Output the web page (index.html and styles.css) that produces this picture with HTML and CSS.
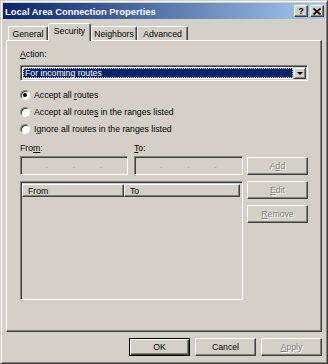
FILE: index.html
```html
<!DOCTYPE html>
<html lang="en">
<head>
  <meta charset="UTF-8" />
  <title>Local Area Connection Properties</title>
  <link rel="stylesheet" href="styles.css">
</head>
<body>
  <div class="window">
    <div class="titlebar">
      <span class="title">Local Area Connection Properties</span>
      <div class="caption-btns">
        <span class="cbtn help">?</span>
        <span class="cbtn">
          <svg width="8" height="7" viewBox="0 0 8 7"><path d="M0.5 0.5 L7.5 6.5 M7.5 0.5 L0.5 6.5" stroke="#000" stroke-width="1.6"/></svg>
        </span>
      </div>
    </div>

    <div class="tabs">
      <div class="tab tab-general">General</div>
      <div class="tab tab-security active">Security</div>
      <div class="tab tab-neighbors">Neighbors</div>
      <div class="tab tab-advanced">Advanced</div>
    </div>

    <div class="panel">
      <div class="field-label"><u>A</u>ction:</div>
      <div class="combo">
        <div class="combo-value"><span>For incoming routes</span></div>
        <div class="combo-arrow"><span class="tri"></span></div>
      </div>

      <div class="radios">
        <div class="radio-row"><span class="radio checked"></span><span>Accept all <u>r</u>outes</span></div>
        <div class="radio-row"><span class="radio"></span><span>Accept all route<u>s</u> in the ranges listed</span></div>
        <div class="radio-row"><span class="radio"></span><span>I<u>g</u>nore all routes in the ranges listed</span></div>
      </div>

      <div class="ranges">
        <div class="range-fields">
          <div class="range-col">
            <div class="field-label">Fro<u>m</u>:</div>
            <div class="ipbox"><i>.</i><i>.</i><i>.</i></div>
          </div>
          <div class="range-col">
            <div class="field-label"><u>T</u>o:</div>
            <div class="ipbox"><i>.</i><i>.</i><i>.</i></div>
          </div>
        </div>
        <div class="btn disabled side-add">A<u>d</u>d</div>

        <div class="listview">
          <div class="list-header">
            <div class="col col-from">From</div>
            <div class="col col-to">To</div>
          </div>
        </div>
        <div class="side-btns">
          <div class="btn disabled"><u>E</u>dit</div>
          <div class="btn disabled"><u>R</u>emove</div>
        </div>
      </div>
    </div>

    <div class="footer">
      <div class="btn default">OK</div>
      <div class="btn">Cancel</div>
      <div class="btn disabled"><u>A</u>pply</div>
    </div>
  </div>
</body>
</html>
```

FILE: styles.css
```css
body {
  margin: 0;
  font-family: "Liberation Sans", Arial, sans-serif;
  font-size: 8.7px;
  color: #000000;
  background: #d4d0c8;
}
u {
  text-decoration: underline;
  text-underline-offset: 1px;
}
.window {
  width: 328px;
  height: 364px;
  box-sizing: border-box;
  background: #d4d0c8;
  border: 1px solid;
  border-color: #d4d0c8 #404040 #404040 #d4d0c8;
  box-shadow: inset 1px 1px #ffffff, inset -1px -1px #808080;
  padding: 2px;
  display: flex;
  flex-direction: column;
}
.titlebar {
  height: 16px;
  background: linear-gradient(to right, #0a246a, #a6caf0);
  display: flex;
  align-items: center;
  justify-content: space-between;
  padding: 0 1px 0 2px;
}
.title {
  color: #ffffff;
  font-weight: bold;
  font-size: 9.4px;
}
.caption-btns {
  display: flex;
  gap: 2px;
}
.cbtn {
  width: 14px;
  height: 12px;
  box-sizing: border-box;
  background: #d4d0c8;
  border: 1px solid;
  border-color: #ffffff #404040 #404040 #ffffff;
  box-shadow: inset -1px -1px #808080;
  display: flex;
  align-items: center;
  justify-content: center;
  font-weight: bold;
  font-size: 9px;
  line-height: 1;
}
.tabs {
  display: flex;
  align-items: flex-end;
  height: 19px;
  margin-top: 2px;
  padding-left: 5px;
  position: relative;
  z-index: 1;
}
.tab {
  height: 14px;
  box-sizing: border-box;
  border: 1px solid;
  border-bottom: none;
  border-color: #ffffff #404040 transparent #ffffff;
  box-shadow: inset -1px 0 #808080;
  border-radius: 2px 2px 0 0;
  display: flex;
  align-items: center;
  justify-content: center;
}
.tab-general { width: 40px; }
.tab-security { width: 43px; }
.tab-neighbors { width: 46px; }
.tab-advanced { width: 51px; }
.tab.active {
  height: 18px;
  margin-bottom: -1px;
  background: #d4d0c8;
  padding-bottom: 3px;
}
.panel {
  height: 292px;
  margin: 0 3px 0 3px;
  box-sizing: border-box;
  border: 1px solid;
  border-color: #ffffff #404040 #404040 #ffffff;
  box-shadow: inset -1px -1px #808080;
  padding: 8px 13px 0 13px;
}
.field-label {
  height: 11px;
  line-height: 11px;
}
.panel > .field-label {
  margin-bottom: 5px;
}
.combo {
  height: 16px;
  box-sizing: border-box;
  border: 1px solid;
  border-color: #808080 #ffffff #ffffff #808080;
  box-shadow: inset 1px 1px #404040, inset -1px -1px #d4d0c8;
  background: #ffffff;
  display: flex;
  padding: 2px;
}
.combo-value {
  flex: 1;
  background: #0a246a;
  color: #ffffff;
  outline: 1px dotted #d4d0c8;
  outline-offset: -1px;
  display: flex;
  align-items: center;
  padding-left: 2px;
}
.combo-arrow {
  width: 13px;
  box-sizing: border-box;
  margin: -1px -1px -1px 0;
  background: #d4d0c8;
  border: 1px solid;
  border-color: #d4d0c8 #404040 #404040 #d4d0c8;
  box-shadow: inset 1px 1px #ffffff, inset -1px -1px #808080;
  display: flex;
  align-items: center;
  justify-content: center;
}
.tri {
  width: 0;
  height: 0;
  border-left: 3px solid transparent;
  border-right: 3px solid transparent;
  border-top: 3px solid #000000;
}
.radios {
  margin-top: 6px;
  display: flex;
  flex-direction: column;
  gap: 1px;
}
.radio-row {
  height: 16px;
  display: flex;
  align-items: center;
  gap: 4px;
  padding-left: 0;
}
.radio {
  width: 10px;
  height: 10px;
  box-sizing: border-box;
  border-radius: 50%;
  background: #ffffff;
  border: 1px solid;
  border-color: #808080 #ffffff #ffffff #808080;
  box-shadow: inset 1px 1px #404040;
  position: relative;
}
.radio.checked::after {
  content: "";
  position: absolute;
  left: 2px;
  top: 2px;
  width: 4px;
  height: 4px;
  border-radius: 50%;
  background: #000000;
}
.ranges {
  margin-top: 6px;
  display: grid;
  grid-template-columns: 223px 61px;
  column-gap: 4px;
  row-gap: 6px;
}
.range-fields {
  display: grid;
  grid-template-columns: 108px 109px;
  column-gap: 6px;
}
.range-col .field-label {
  margin-bottom: 2px;
}
.ipbox {
  height: 19px;
  box-sizing: border-box;
  border: 1px solid;
  border-color: #808080 #ffffff #ffffff #808080;
  box-shadow: inset 1px 1px #404040, inset -1px -1px #d4d0c8;
  display: flex;
  justify-content: space-evenly;
  align-items: center;
}
.ipbox i {
  font-style: normal;
  color: #a8a49c;
  line-height: 1;
}
.btn {
  height: 18px;
  box-sizing: border-box;
  background: #d4d0c8;
  border: 1px solid;
  border-color: #ffffff #404040 #404040 #ffffff;
  box-shadow: inset -1px -1px #808080;
  display: flex;
  align-items: center;
  justify-content: center;
}
.btn.disabled {
  color: #808080;
  text-shadow: 1px 1px #ffffff;
}
.side-add {
  align-self: end;
  margin-bottom: 0;
}
.side-btns {
  display: flex;
  flex-direction: column;
  gap: 6px;
}
.listview {
  height: 119px;
  box-sizing: border-box;
  border: 1px solid;
  border-color: #808080 #ffffff #ffffff #808080;
  box-shadow: inset 1px 1px #404040, inset -1px -1px #d4d0c8;
  padding: 2px 2px 0 1px;
}
.list-header {
  display: flex;
  height: 13px;
}
.col {
  box-sizing: border-box;
  border: 1px solid;
  border-color: #ffffff #404040 #404040 #ffffff;
  box-shadow: inset -1px -1px #808080;
  padding-left: 5px;
  display: flex;
  align-items: center;
}
.col-from { width: 102px; }
.col-to { flex: 1; }
.footer {
  margin-top: 6px;
  display: flex;
  justify-content: flex-end;
  gap: 5px;
  padding-right: 3px;
}
.footer .btn {
  width: 61px;
}
.btn.default {
  border-color: #000000;
  box-shadow: inset 1px 1px #ffffff, inset -1px -1px #404040, inset -2px -2px #808080;
}
```
